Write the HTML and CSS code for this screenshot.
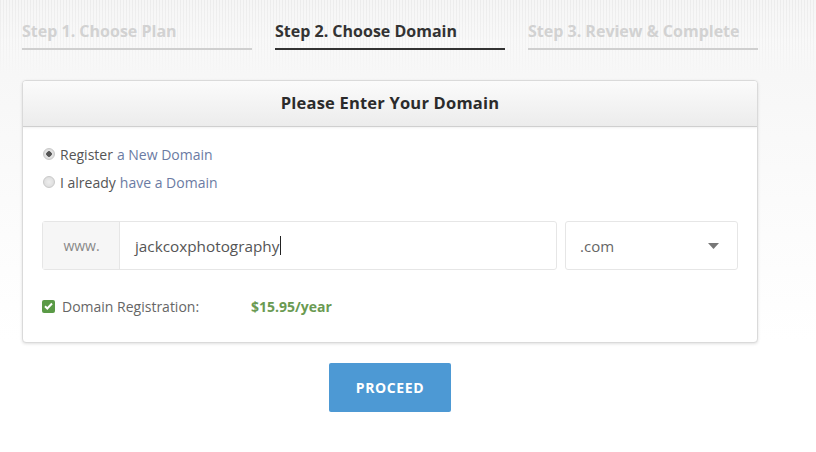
FILE: index.html
```html
<!DOCTYPE html>
<html>
<head>
<meta charset="utf-8">
<link rel="stylesheet" href="styles.css">
</head>
<body>
<div class="page">
  <nav class="steps">
    <div class="step">Step 1. Choose Plan</div>
    <div class="step active">Step 2. Choose Domain</div>
    <div class="step">Step 3. Review &amp; Complete</div>
  </nav>

  <section class="card">
    <header class="card-head">Please Enter Your Domain</header>
    <div class="card-body">
      <div class="options">
        <label class="option"><span class="radio checked"></span>Register <span class="link">a New Domain</span></label>
        <label class="option"><span class="radio"></span>I already <span class="link">have a Domain</span></label>
      </div>

      <div class="domain-row">
        <div class="input-group">
          <span class="prefix">www.</span>
          <span class="field">jackcoxphotography<span class="caret"></span></span>
        </div>
        <div class="select">
          <span>.com</span>
          <svg class="arrow" width="11" height="6" viewBox="0 0 11 6"><path d="M0 0h11L5.5 6z" fill="#777"/></svg>
        </div>
      </div>

      <div class="reg-row">
        <span class="check">
          <svg width="9" height="8" viewBox="0 0 9 8"><path d="M1 4.2l2.3 2.3L8 1.5" fill="none" stroke="#fff" stroke-width="2"/></svg>
        </span>
        <span class="reg-label">Domain Registration:</span>
        <span class="price">$15.95/year</span>
      </div>
    </div>
  </section>

  <div class="actions">
    <button class="proceed">PROCEED</button>
  </div>
</div>
</body>
</html>
```

FILE: styles.css
```css
* { box-sizing: border-box; }
html, body { margin: 0; padding: 0; }
body {
  font-family: "Open Sans", "DejaVu Sans", sans-serif;
  background:
    linear-gradient(to bottom, rgba(255,255,255,0) 0px, rgba(255,255,255,0.3) 40px, #f7f7f7 75px, #fbfbfb 200px, #fff 340px),
    repeating-linear-gradient(to right, #ececec 0px, #ececec 1px, #f6f6f6 1px, #f6f6f6 3px);
  width: 816px;
  height: 452px;
  overflow: hidden;
}
.page { padding: 0 0 0 22px; width: 758px; }

.steps {
  display: flex;
  gap: 23px;
  padding-top: 19px;
}
.step {
  width: 230px;
  font-size: 16px;
  font-weight: 700;
  color: #d2d2d2;
  line-height: 24px;
  padding-bottom: 5px;
  border-bottom: 2px solid #cfcfcf;
}
.step.active {
  color: #333;
  border-bottom: 2px solid #333;
}

.card {
  margin-top: 30px;
  width: 736px;
  height: 263px;
  background: #fff;
  border: 1px solid #dadada;
  border-radius: 4px;
  box-shadow: 0 1px 3px rgba(0,0,0,0.12);
  overflow: hidden;
}
.card-head {
  height: 46px;
  line-height: 43px;
  text-align: center;
  font-size: 16.5px;
  font-weight: 700;
  color: #2b2b2b;
  letter-spacing: 0.2px;
  background: linear-gradient(to bottom, #fbfbfb, #ececec);
  border-bottom: 1px solid #cfcfcf;
  box-shadow: 0 1px 2px rgba(0,0,0,0.06);
}
.card-body { padding: 13px 19px 0 19px; }

.options { display: flex; flex-direction: column; }
.option {
  display: flex;
  align-items: center;
  height: 28px;
  font-size: 14px;
  color: #555;
}
.radio {
  width: 12px;
  height: 12px;
  border-radius: 50%;
  border: 1px solid #c9c9c9;
  background: radial-gradient(circle, #eee, #d8d8d8);
  margin: 0 5px 0 1px;
}
.radio.checked {
  background: radial-gradient(circle, #555 0, #555 2.5px, #e6e6e6 3px, #d6d6d6 6px);
}
.link { color: #6b7ba3; margin-left: 4px; }

.domain-row {
  display: flex;
  gap: 8px;
  margin-top: 25px;
  height: 49px;
}
.input-group {
  display: flex;
  width: 515px;
  border: 1px solid #e6e6e6;
  border-radius: 3px;
}
.prefix {
  width: 77px;
  background: #f6f6f6;
  border-right: 1px solid #e6e6e6;
  display: flex;
  align-items: center;
  justify-content: center;
  font-size: 14px;
  color: #888;
  padding-left: 1px;
}
.field {
  flex: 1;
  display: flex;
  align-items: center;
  padding-left: 15px;
  font-size: 15.3px;
  color: #555;
}
.caret {
  display: inline-block;
  width: 1px;
  height: 19px;
  background: #222;
  margin-left: 1px;
}
.select {
  width: 173px;
  border: 1px solid #e6e6e6;
  border-radius: 3px;
  display: flex;
  align-items: center;
  justify-content: space-between;
  padding: 0 18px 0 14px;
  font-size: 15px;
  color: #666;
}

.reg-row {
  display: flex;
  align-items: center;
  margin-top: 29px;
  height: 14px;
  font-size: 14px;
}
.check {
  width: 13px;
  height: 13px;
  background: #5a9a46;
  border-radius: 2px;
  display: flex;
  align-items: center;
  justify-content: center;
}
.reg-label { color: #666; margin-left: 7px; width: 189px; }
.price { color: #6a9a52; font-weight: 700; }

.actions {
  width: 736px;
  display: flex;
  justify-content: center;
  margin-top: 20px;
}
.proceed {
  width: 122px;
  height: 49px;
  border: none;
  border-radius: 2px;
  background: #4d99d4;
  color: #fff;
  font-family: "Open Sans", sans-serif;
  font-weight: 700;
  font-size: 14px;
  letter-spacing: 0.6px;
}
```
